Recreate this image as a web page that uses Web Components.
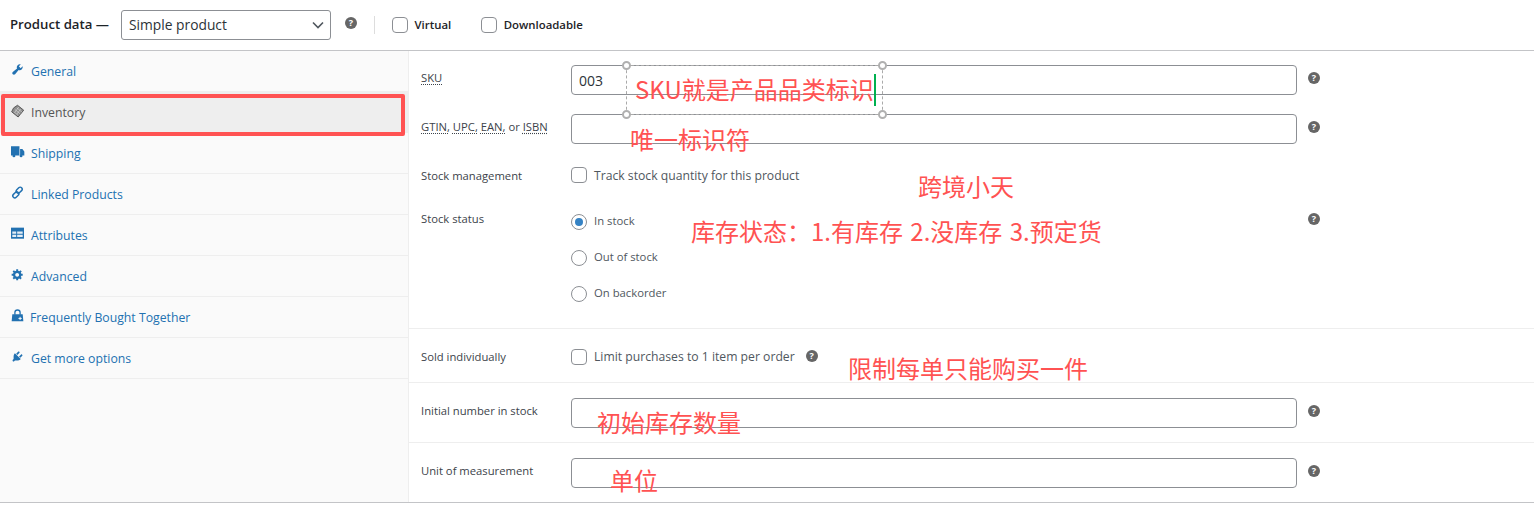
<!DOCTYPE html>
<html lang="en">
<head>
<meta charset="utf-8">
<title>Product data</title>
<style>
  html, body { margin: 0; height: 100%; background: #fff; overflow: hidden; }
  body { font-family: "Open Sans", "Noto Sans CJK SC", sans-serif; color: #3c434a; }
</style>
</head>
<body>

<product-box>
  <data-header slot="header"></data-header>

  <data-tab slot="tabs" icon="wrench">General</data-tab>
  <data-tab slot="tabs" icon="tag" active>Inventory</data-tab>
  <data-tab slot="tabs" icon="truck">Shipping</data-tab>
  <data-tab slot="tabs" icon="link">Linked Products</data-tab>
  <data-tab slot="tabs" icon="table">Attributes</data-tab>
  <data-tab slot="tabs" icon="gear">Advanced</data-tab>
  <data-tab slot="tabs" icon="bag" tight>Frequently Bought Together</data-tab>
  <data-tab slot="tabs" icon="plug">Get more options</data-tab>

  <form-group style="padding:14px 0 0">
    <form-row label="SKU" abbr value="003" help style="margin-bottom:19px"></form-row>
    <form-row label="GTIN, UPC, EAN, or ISBN" abbr help style="margin-bottom:23px"></form-row>
    <check-row label="Stock management" text="Track stock quantity for this product" style="margin-bottom:31px"></check-row>
    <radio-row label="Stock status" help>
      <radio-item checked>In stock</radio-item>
      <radio-item>Out of stock</radio-item>
      <radio-item>On backorder</radio-item>
    </radio-row>
  </form-group>
  <form-group style="padding:20px 0 17px">
    <check-row label="Sold individually" text="Limit purchases to 1 item per order" help style="--lift:-2px"></check-row>
  </form-group>
  <form-group style="padding:15px 0 14px">
    <form-row label="Initial number in stock" help></form-row>
  </form-group>
  <form-group last style="padding:15px 0 14px">
    <form-row label="Unit of measurement" help></form-row>
  </form-group>
</product-box>

<mark-box style="left:1px;top:94px;width:404px;height:42px"></mark-box>
<select-frame style="left:626px;top:65px;width:257px;height:50px"></select-frame>
<text-note style="left:635px;top:72px" caret>SKU就是产品品类标识</text-note>
<text-note style="left:630px;top:122px">唯一标识符</text-note>
<text-note style="left:918px;top:169px">跨境小天</text-note>
<text-note style="left:691px;top:214px;word-spacing:2px">库存状态：1.有库存 2.没库存 3.预定货</text-note>
<text-note style="left:848px;top:351px">限制每单只能购买一件</text-note>
<text-note style="left:597px;top:405px">初始库存数量</text-note>
<text-note style="left:610px;top:463px">单位</text-note>

<script>
const ICONS = {
  wrench: '<path d="M16.68 9.77c-1.34 1.34-3.3 1.67-4.95.99l-5.41 6.52c-.99.99-2.59.99-3.58 0s-.99-2.59 0-3.58l6.52-5.41c-.68-1.65-.35-3.61.99-4.95 1.28-1.28 3.12-1.62 4.72-1.06l-2.89 2.89 2.82 2.82 2.86-2.87c.53 1.58.18 3.39-1.08 4.65z"/>',
  tag: '<path d="M10 2 19.500 9.500 11 20 1 12 4 6Z" fill="#8d8d8d" stroke="#555" stroke-width="1.500"/><path d="M6 8.500 14.500 15.500M9 6 17 12.500M4.500 12 11 17.500M12 4.500 6 13M15 7.500 9 15.500" stroke="#ddd" stroke-width=".9" fill="none"/>',
  truck: '<path d="M0 2h13v14H0zM14 6h3.500L20.500 10v6H14z"/><circle cx="4.500" cy="16.800" r="2.200"/><circle cx="15.500" cy="16.800" r="2.200"/>',
  link: '<g fill="none" stroke="currentColor" stroke-width="2.200"><rect x="9.500" y="1.200" width="6.200" height="10.500" rx="3.100" transform="rotate(45 12.600 6.450)"/><rect x="4.300" y="8.300" width="6.200" height="10.500" rx="3.100" transform="rotate(45 7.400 13.550)"/></g>',
  table: '<path d="M0 1h20v17H0z"/><path d="M2 7h6v3.500H2zM9.500 7H18v3.500H9.500zM2 12h6v3.500H2zM9.500 12H18v3.500H9.500z" fill="#e4edf5"/>',
  gear: '<path fill-rule="evenodd" d="M18 12h-2.180c-.17.7-.44 1.350-.81 1.930l1.540 1.540-2.100 2.100-1.540-1.540c-.58.36-1.230.63-1.910.79V19H8v-2.180c-.68-.16-1.330-.43-1.910-.79l-1.540 1.540-2.120-2.120 1.540-1.540c-.36-.58-.63-1.230-.79-1.910H1V9.030h2.170c.16-.7.44-1.350.8-1.940L2.430 5.550l2.100-2.100 1.540 1.540c.58-.37 1.240-.64 1.930-.81V2h3v2.180c.68.16 1.330.43 1.910.79l1.540-1.540 2.120 2.120-1.540 1.540c.36.59.64 1.240.8 1.940H18V12zm-8.500 1.500c1.660 0 3-1.340 3-3s-1.340-3-3-3-3 1.340-3 3 1.340 3 3 3z"/>',
  bag: '<path d="M2 8h16l1 11H1z"/><path d="M6 9V5.500a4 4 0 0 1 8 0V9" fill="none" stroke="currentColor" stroke-width="2"/><path d="M11.500 14.500h5M14 12v5" stroke="#fafafa" stroke-width="1.500"/>',
  plug: '<path d="M13.110 4.360L9.870 7.600 8 5.730l3.240-3.240c.35-.34 1.050-.2 1.560.32.52.51.66 1.210.31 1.550zm-8 1.770l.91-1.120 9.010 9.010-1.190.84c-.71.71-2.630 1.160-3.820 1.160H6.140L4.900 17.260c-.59.59-1.540.59-2.120 0-.59-.58-.59-1.530 0-2.120l1.240-1.240v-3.880c0-1.130.4-3.190 1.090-3.890zm7.260 3.970l3.240-3.240c.34-.35 1.040-.21 1.550.31.52.51.66 1.210.31 1.550l-3.240 3.250z"/>'
};

const FONT = '"Open Sans", "Noto Sans", sans-serif';

const BOX_CSS = `
  input[type=checkbox], input[type=radio] {
    appearance: none; margin: 0; width: 16px; height: 16px; box-sizing: border-box;
    border: 1px solid #8c8f94; background: #fff; flex: none;
  }
  input[type=checkbox] { border-radius: 4px; }
  input[type=radio] { border-radius: 50%; display: grid; place-items: center; }
  input[type=radio]:checked::before {
    content: ''; width: 8px; height: 8px; border-radius: 50%; background: #3582c4;
  }
`;

function define(name, html) {
  customElements.define(name, class extends HTMLElement {
    connectedCallback() {
      if (this.shadowRoot) return;
      this.attachShadow({ mode: 'open' });
      this.shadowRoot.innerHTML = typeof html === 'function' ? html(this) : html;
    }
  });
}

// the little dark round question mark
define('help-tip', `
  <style>
    :host { display: inline-grid; place-items: center; width: 12px; height: 12px; border-radius: 50%;
      background: #666; flex: none; }
    span { color: #fff; font: 700 9px/12px "Open Sans", sans-serif; }
  </style>
  <span>?</span>`);

define('product-box', `
  <style>
    :host { display: block; height: 503px; box-sizing: border-box; border-bottom: 1px solid #c3c4c7; }
    .head { border-bottom: 1px solid #c3c4c7; }
    .body { display: flex; height: 451px; }
    .tabs { width: 408px; flex: none; background: #fafafa; border-right: 1px solid #eee; }
    .panel { flex: 1; min-width: 0; }
  </style>
  <div class="head"><slot name="header"></slot></div>
  <div class="body">
    <div class="tabs"><slot name="tabs"></slot></div>
    <div class="panel"><slot></slot></div>
  </div>`);

define('data-header', `
  <style>
    :host { display: flex; align-items: center; height: 50px; padding-left: 10px; box-sizing: border-box;
      font-family: ${FONT}; color: #1d2327; }
    b { font-size: 13.2px; font-weight: 600; width: 111px; flex: none; margin-top: -2px; }
    .select { width: 210px; height: 30px; box-sizing: border-box; border: 1px solid #8c8f94; border-radius: 3px;
      display: flex; align-items: center; justify-content: space-between; padding: 0 6px 0 7px;
      font-size: 13.8px; font-weight: 500; color: #2c3338; }
    .select span { margin-top: -2px; }
    .select svg { width: 12px; height: 8px; }
    help-tip { margin: -4px 0 0 14px; }
    i { width: 1px; height: 18px; background: #ddd; margin: 0 17px; flex: none; }
    label { display: flex; align-items: center; gap: 6.500px; font-size: 11.400px; font-weight: 600; }
    label span { margin-top: -1px; }
    label + label { margin-left: 30px; }
    ${BOX_CSS}
  </style>
  <b>Product data —</b>
  <div class="select"><span>Simple product</span>
    <svg viewBox="0 0 12 8"><path d="M1 1.500 6 6.500 11 1.500" fill="none" stroke="#50575e" stroke-width="1.600"/></svg>
  </div>
  <help-tip></help-tip>
  <i></i>
  <label><input type="checkbox"><span>Virtual</span></label>
  <label><input type="checkbox"><span>Downloadable</span></label>`);

define('data-tab', el => {
  const active = el.hasAttribute('active');
  return `
  <style>
    :host { display: flex; align-items: center; border-bottom: 1px solid #eee;
      padding-left: 11px; box-sizing: border-box; height: 41px;
      background: ${active ? '#eee' : 'transparent'};
      color: ${active ? '#555' : '#2271b1'};
      font: 12.250px ${FONT}; }
    svg { width: 13px; height: 13px; fill: currentColor; overflow: visible;
      margin: -4px ${el.hasAttribute('tight') ? 6 : 7}px 0 0; flex: none; }
  </style>
  <svg viewBox="0 0 20 20">${ICONS[el.getAttribute('icon')]}</svg><slot></slot>`;
});

define('form-group', el => `
  <style>
    :host { display: block; border-bottom: ${el.hasAttribute('last') ? 0 : 1}px solid #eee; }
  </style>
  <slot></slot>`);

const LABEL_CSS = `
  .lab { width: 150px; flex: none; padding-left: 12px; font: 11.250px ${FONT}; color: #3c434a; }
  .ab { text-decoration: underline dotted; text-underline-offset: 2px; }
`;

// the codes in a label get the dotted underline of an abbr
function labelHtml(el) {
  const text = el.getAttribute('label');
  if (!el.hasAttribute('abbr')) return text;
  return text.replace(/[A-Z]{3,},?/g, w => `<span class="ab">${w}</span>`);
}

define('form-row', el => `
  <style>
    :host { display: flex; align-items: center; }
    ${LABEL_CSS}
    .lab { margin-top: -5px; }
    input { width: 726px; height: 30px; box-sizing: border-box; border: 1px solid #8c8f94; border-radius: 4px;
      margin: 0; padding: 0 7px; font: 14px ${FONT}; color: #2c3338; background: #fff; outline: 0; }
    help-tip { margin: -4px 0 0 11px; }
  </style>
  <div class="lab">${labelHtml(el)}</div>
  <input type="text" value="${el.getAttribute('value') || ''}">
  ${el.hasAttribute('help') ? '<help-tip></help-tip>' : ''}`);

define('check-row', el => `
  <style>
    :host { display: flex; align-items: center; height: 16px; }
    ${LABEL_CSS}
    ${BOX_CSS}
    .lab { margin-top: var(--lift, 0); }
    span.t { font: 12.200px ${FONT}; color: #50575e; margin: var(--lift, 0) 0 0 7px; }
    help-tip { margin: -3px 0 0 11px; }
  </style>
  <div class="lab">${labelHtml(el)}</div>
  <input type="checkbox"><span class="t">${el.getAttribute('text')}</span>
  ${el.hasAttribute('help') ? '<help-tip></help-tip>' : ''}`);

define('radio-row', el => `
  <style>
    :host { display: flex; align-items: flex-start; padding-bottom: 26px; }
    ${LABEL_CSS}
    .lab { line-height: 10px; }
    .list { width: 726px; display: flex; flex-direction: column; gap: 20px; flex: none; }
    help-tip { margin: -1px 0 0 11px; }
  </style>
  <div class="lab">${labelHtml(el)}</div>
  <div class="list"><slot></slot></div>
  ${el.hasAttribute('help') ? '<help-tip></help-tip>' : ''}`);

define('radio-item', el => `
  <style>
    :host { display: flex; align-items: center; gap: 7px; height: 16px; font: 11.300px ${FONT}; color: #50575e; }
    ${BOX_CSS}
    span { margin-top: -3px; }
  </style>
  <input type="radio" ${el.hasAttribute('checked') ? 'checked' : ''}><span><slot></slot></span>`);

// annotations drawn over the form
define('text-note', el => `
  <style>
    :host { position: absolute; white-space: nowrap; font: 24px/34px "Noto Sans CJK SC", "Open Sans", sans-serif;
      color: #ff5252; }
    i { position: absolute; left: 239px; top: 2px; width: 2px; height: 32px; background: #00b050; }
  </style>
  <slot></slot>${el.hasAttribute('caret') ? '<i></i>' : ''}`);

define('mark-box', `
  <style>
    :host { position: absolute; box-sizing: border-box; border: 4px solid #ff5252; border-radius: 2px; }
  </style>`);

define('select-frame', `
  <style>
    :host { position: absolute; box-sizing: border-box; border: 1px dashed #aaa; }
    i { position: absolute; width: 9px; height: 9px; box-sizing: border-box; border: 2px solid #b0b0b0;
      border-radius: 50%; background: #fff; }
    .a { left: -5px; top: -5px; } .b { right: -5px; top: -5px; }
    .c { left: -5px; bottom: -5px; } .d { right: -5px; bottom: -5px; }
  </style>
  <i class="a"></i><i class="b"></i><i class="c"></i><i class="d"></i>`);
</script>
</body>
</html>
